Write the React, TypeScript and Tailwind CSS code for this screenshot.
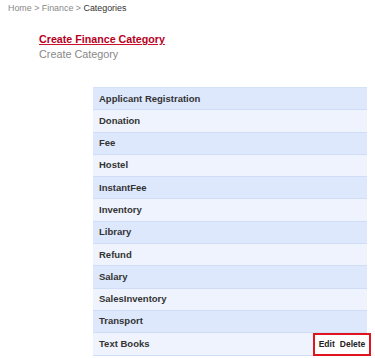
import React from 'react';

const categories = [
  'Applicant Registration',
  'Donation',
  'Fee',
  'Hostel',
  'InstantFee',
  'Inventory',
  'Library',
  'Refund',
  'Salary',
  'SalesInventory',
  'Transport',
  'Text Books',
];

const App: React.FC = () => {
  return (
    <div className="w-[375px] h-[358px] bg-white overflow-hidden font-['Liberation_Sans',Arial,sans-serif]">
      <div className="pl-2 pt-[3px] text-[8.9px] leading-[10px] text-[#888]">
        Home &gt; Finance &gt; <span className="text-[#333]">Categories</span>
      </div>

      <div className="pl-[39px] pt-[20px]">
        <a href="#" className="block text-[10.7px] leading-[13px] font-bold text-[#b5001e] underline decoration-[#c8102e] underline-offset-[1px]">
          Create Finance Category
        </a>
        <div className="mt-[2px] text-[10.8px] leading-[13px] text-[#888]">Create Category</div>
      </div>

      <div className="ml-[93px] mt-[26px] w-[274px] border-t border-[#d4e1f7]">
        {categories.map((name, i) => (
          <div
            key={name}
            className={`relative flex items-center h-[22.3px] pl-[6px] border-b border-[#cfddf6] text-[9.5px] font-bold text-[#333] ${
              i % 2 === 0 ? 'bg-[#dde8fc]' : 'bg-[#eef3fd]'
            }`}
          >
            {name}
            {name === 'Text Books' && (
              <div className="absolute left-[220px] top-0 h-[23px] w-[58px] border-2 border-[#e0141e] bg-white flex items-center justify-center gap-[5px] text-[8.5px] font-bold text-[#222]">
                <span>Edit</span>
                <span>Delete</span>
              </div>
            )}
          </div>
        ))}
      </div>
    </div>
  );
};

export default App;
